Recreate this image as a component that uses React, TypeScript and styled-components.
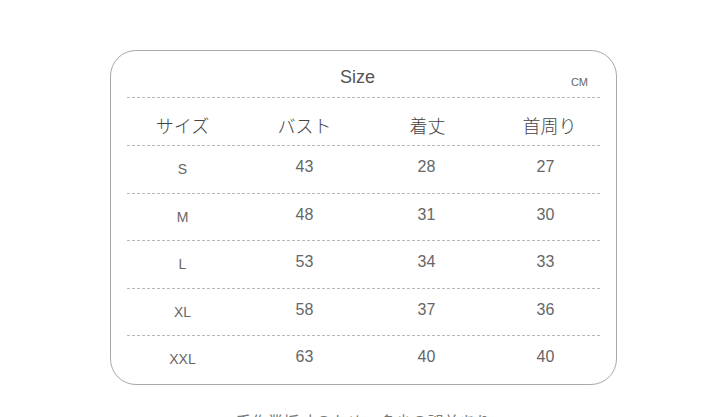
import React from "react";
import styled, { createGlobalStyle } from "styled-components";

const sizes = [
  { size: "S", bust: 43, length: 28, neck: 27 },
  { size: "M", bust: 48, length: 31, neck: 30 },
  { size: "L", bust: 53, length: 34, neck: 33 },
  { size: "XL", bust: 58, length: 37, neck: 36 },
  { size: "XXL", bust: 63, length: 40, neck: 40 },
];

const GlobalStyle = createGlobalStyle`
  html, body {
    margin: 0;
    padding: 0;
    background: #fff;
    overflow: hidden;
  }
  body {
    font-family: "Liberation Sans", "Noto Sans CJK JP", sans-serif;
    color: #555;
  }
`;

const Page = styled.div`
  width: 720px;
  height: 417px;
  padding: 50px 0 0 110px;
  box-sizing: border-box;
`;

const Card = styled.div`
  width: 507px;
  height: 335px;
  box-sizing: border-box;
  border: 1.5px solid #a9a9a9;
  border-radius: 26px;
  display: flex;
  flex-direction: column;
`;

const TitleRow = styled.div`
  position: relative;
  height: 46px;
  display: flex;
  align-items: center;
  justify-content: center;
  padding: 6px 12px 0 0;
  box-sizing: border-box;
`;

const Title = styled.span`
  font-size: 18px;
  color: #555;
`;

const Unit = styled.span`
  position: absolute;
  right: 28px;
  top: 25px;
  font-size: 11px;
  color: #666;
`;

const Divider = styled.div`
  height: 1px;
  margin: 0 15px 0 16px;
  background-image: repeating-linear-gradient(
    to right,
    #b9b9b9 0,
    #b9b9b9 3px,
    transparent 3px,
    transparent 5px
  );
`;

const Row = styled.div<{ $tall?: boolean }>`
  height: ${(p) => (p.$tall ? 47 : 46.5)}px;
  display: grid;
  grid-template-columns: repeat(4, 1fr);
  align-items: center;
  padding: 0 4px 0 9px;
`;

const Cell = styled.span<{ $head?: boolean; $letter?: boolean; $shift?: number }>`
  text-align: center;
  font-size: ${(p) => (p.$head ? 18 : p.$letter ? 14 : 16)}px;
  font-family: ${(p) =>
    p.$head ? '"Noto Sans CJK JP", sans-serif' : '"Liberation Sans", sans-serif'};
  font-weight: ${(p) => (p.$head ? 300 : 400)};
  color: ${(p) => (p.$head ? "#444" : "#666")};
  transform: translate(${(p) => p.$shift ?? 0}px, ${(p) => (p.$head ? 3 : p.$letter ? 0 : -2)}px);
`;

const Caption = styled.div`
  margin-top: 24px;
  width: 507px;
  text-align: center;
  font-family: "Noto Sans CJK JP", sans-serif;
  font-size: 16px;
  color: #777;
`;

export default function App() {
  return (
    <>
      <GlobalStyle />
      <Page>
        <Card>
          <TitleRow>
            <Title>Size</Title>
            <Unit>CM</Unit>
          </TitleRow>
          <Divider />
          <Row $tall>
            <Cell $head $shift={1}>サイズ</Cell>
            <Cell $head>バスト</Cell>
            <Cell $head>着丈</Cell>
            <Cell $head $shift={-1}>首周り</Cell>
          </Row>
          {sizes.map((s) => (
            <React.Fragment key={s.size}>
              <Divider />
              <Row>
                <Cell $letter $shift={1}>{s.size}</Cell>
                <Cell>{s.bust}</Cell>
                <Cell $shift={-1}>{s.length}</Cell>
                <Cell $shift={-5}>{s.neck}</Cell>
              </Row>
            </React.Fragment>
          ))}
        </Card>
        <Caption>手作業採寸のため、多少の誤差あり</Caption>
      </Page>
    </>
  );
}
